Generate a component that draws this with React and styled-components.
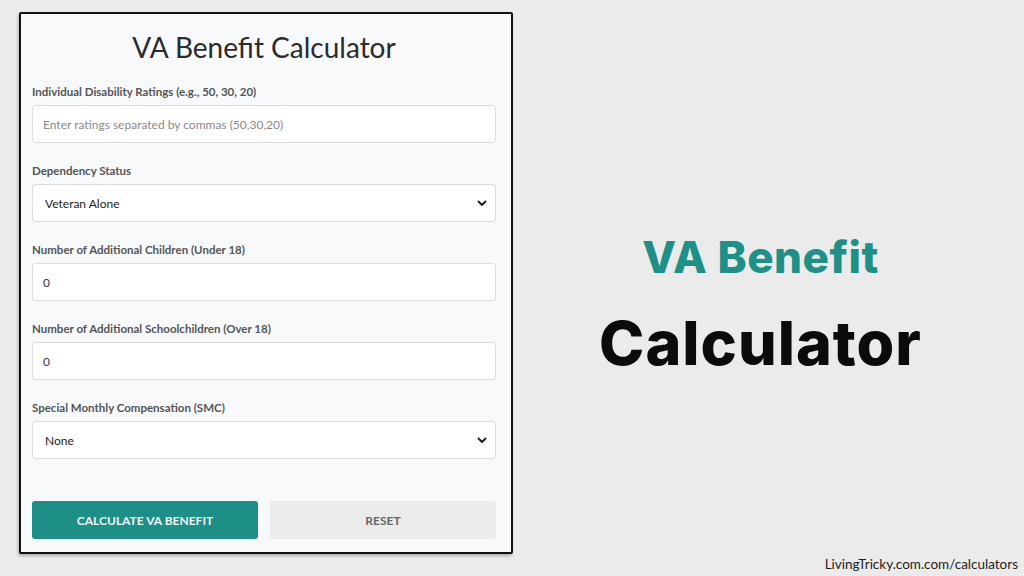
import styled, { createGlobalStyle } from "styled-components";

const GlobalStyle = createGlobalStyle`
  * { box-sizing: border-box; }
  html, body { margin: 0; padding: 0; }
  body {
    background: #ebebeb;
    font-family: Lato, "Liberation Sans", sans-serif;
  }
`;

const Page = styled.div`
  width: 1024px;
  height: 576px;
  display: flex;
  align-items: flex-start;
  padding: 12px 0 0 19px;
  position: relative;
  overflow: hidden;
`;

const Card = styled.div`
  width: 494px;
  height: 542px;
  background: #f8f9fb;
  border: 2px solid #111;
  border-radius: 2px;
  box-shadow: -1px 2px 3px rgba(0, 0, 0, 0.25);
  padding: 0 15px 0 11px;
  display: flex;
  flex-direction: column;
`;

const Title = styled.h1`
  margin: 16px 0 0;
  text-align: center;
  font-size: 28px;
  font-weight: 400;
  color: #2b2b2b;
  line-height: 34px;
`;

const Field = styled.div`
  display: flex;
  flex-direction: column;
  margin-top: ${(p) => p.$top}px;
`;

const Label = styled.label`
  font-size: 11.5px;
  font-weight: 700;
  color: #555;
  line-height: 14px;
  margin-bottom: 6px;
`;

const Input = styled.input`
  height: 38px;
  width: 100%;
  border: 1px solid #dedede;
  border-radius: 3px;
  background: #fff;
  padding: 0 10px;
  font-family: inherit;
  font-size: 12px;
  color: #333;
  outline: none;

  &::placeholder {
    color: #8a8a8a;
  }
`;

const SelectBox = styled.div`
  height: 38px;
  border: 1px solid #dedede;
  border-radius: 3px;
  background: #fff;
  display: flex;
  align-items: center;
  justify-content: space-between;
  padding: 0 7px 0 12px;
  font-size: 12px;
  color: #222;
`;

const Buttons = styled.div`
  display: grid;
  grid-template-columns: 1fr 1fr;
  gap: 12px;
  margin-top: 42px;
`;

const Button = styled.button`
  height: 38px;
  border: none;
  border-radius: 3px;
  font-family: inherit;
  font-size: 12px;
  font-weight: 700;
  text-transform: uppercase;
  background: ${(p) => (p.$primary ? "#1e8f87" : "#ececec")};
  color: ${(p) => (p.$primary ? "#f2f7f6" : "#666")};
  cursor: pointer;
`;

const Side = styled.div`
  flex: 1;
  display: flex;
  flex-direction: column;
  align-items: center;
  padding: 219px 22px 0 0;
  margin-left: 6px;
  font-family: Inter, Lato, sans-serif;
`;

const Teal = styled.div`
  font-size: 44px;
  font-weight: 800;
  color: #1e9088;
  line-height: 52px;
  letter-spacing: 0.5px;
`;

const Big = styled.div`
  margin-top: 25px;
  font-size: 61px;
  font-weight: 800;
  color: #0b0b0b;
  line-height: 70px;
  letter-spacing: 1px;
`;

const Footer = styled.div`
  position: absolute;
  right: 6px;
  bottom: 4px;
  font-size: 13.5px;
  color: #222;
`;

const Chevron = () => (
  <svg width="12" height="12" viewBox="0 0 12 12">
    <path d="M2.5 4.5 L6 8 L9.5 4.5" fill="none" stroke="#222" strokeWidth="2" strokeLinecap="round" strokeLinejoin="round" />
  </svg>
);

export default function App() {
  return (
    <>
      <GlobalStyle />
      <Page>
        <Card>
          <Title>VA Benefit Calculator</Title>
          <Field $top={21}>
            <Label>Individual Disability Ratings (e.g., 50, 30, 20)</Label>
            <Input placeholder="Enter ratings separated by commas (50,30,20)" />
          </Field>
          <Field $top={21}>
            <Label>Dependency Status</Label>
            <SelectBox>
              <span>Veteran Alone</span>
              <Chevron />
            </SelectBox>
          </Field>
          <Field $top={21}>
            <Label>Number of Additional Children (Under 18)</Label>
            <Input defaultValue="0" />
          </Field>
          <Field $top={21}>
            <Label>Number of Additional Schoolchildren (Over 18)</Label>
            <Input defaultValue="0" />
          </Field>
          <Field $top={21}>
            <Label>Special Monthly Compensation (SMC)</Label>
            <SelectBox>
              <span>None</span>
              <Chevron />
            </SelectBox>
          </Field>
          <Buttons>
            <Button $primary>Calculate VA Benefit</Button>
            <Button>Reset</Button>
          </Buttons>
        </Card>
        <Side>
          <Teal>VA Benefit</Teal>
          <Big>Calculator</Big>
        </Side>
        <Footer>LivingTricky.com.com/calculators</Footer>
      </Page>
    </>
  );
}
